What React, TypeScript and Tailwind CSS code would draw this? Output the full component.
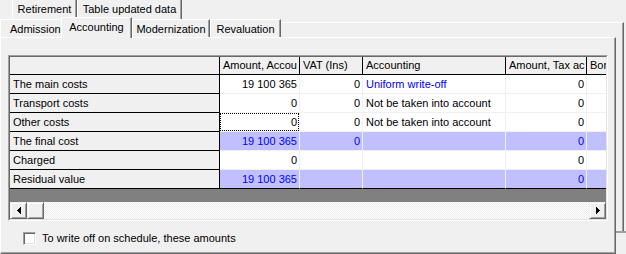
import React from "react";

type Row = {
  label: string;
  hi: boolean;
  cells: string[];
  blue: boolean[];
  focus?: number;
};

const colW = ["w-[80px]", "w-[63px]", "w-[143px]", "w-[81px]", "w-[40px]"];
const header = ["Amount, Accou", "VAT (Ins)", "Accounting", "Amount, Tax ac", "Bor"];

const rows: Row[] = [
  { label: "The main costs", hi: false, cells: ["19 100 365", "0", "Uniform write-off", "0", ""], blue: [false, false, true, false, false] },
  { label: "Transport costs", hi: false, cells: ["0", "0", "Not be taken into account", "0", ""], blue: [false, false, false, false, false] },
  { label: "Other costs", hi: false, cells: ["0", "0", "Not be taken into account", "0", ""], blue: [false, false, false, false, false], focus: 0 },
  { label: "The final cost", hi: true, cells: ["19 100 365", "0", "", "0", ""], blue: [true, true, true, true, true] },
  { label: "Charged", hi: false, cells: ["0", "", "", "0", ""], blue: [false, false, false, false, false] },
  { label: "Residual value", hi: true, cells: ["19 100 365", "", "", "0", ""], blue: [true, true, true, true, true] },
];

function TopTab({ w, children }: { w: string; children: React.ReactNode }) {
  return (
    <div
      className={`${w} h-full shrink-0 flex items-center justify-center pb-[1px] border-l border-white border-r border-r-[#696969] shadow-[inset_-1px_0_0_#a0a0a0]`}
    >
      {children}
    </div>
  );
}

function ScrollButton({ dir }: { dir: "left" | "right" | "none" }) {
  return (
    <div className="w-[17px] h-[17px] shrink-0 bg-[#f0f0f0] border border-t-[#f0f0f0] border-l-[#f0f0f0] border-b-[#696969] border-r-[#696969] shadow-[inset_1px_1px_0_#ffffff,inset_-1px_-1px_0_#a0a0a0] flex items-center justify-center">
      {dir === "left" && (
        <svg width="4" height="7" viewBox="0 0 4 7" shapeRendering="crispEdges">
          <polygon points="4,0 4,7 0,3.5" fill="#000" />
        </svg>
      )}
      {dir === "right" && (
        <svg width="4" height="7" viewBox="0 0 4 7" shapeRendering="crispEdges">
          <polygon points="0,0 0,7 4,3.5" fill="#000" />
        </svg>
      )}
    </div>
  );
}

export default function App() {
  return (
    <div className="w-[626px] h-[254px] overflow-hidden bg-[#f0f0f0] flex flex-col text-[11px] leading-[13px] text-black font-['Liberation_Sans',Arial,sans-serif]">
      {/* back row of tabs */}
      <div className="h-[19px] shrink-0 flex pl-[12px]">
        <TopTab w="w-[65px]">Retirement</TopTab>
        <TopTab w="w-[105px]">Table updated data</TopTab>
      </div>

      <div className="flex flex-1 min-h-0">
        <div className="w-[616px] shrink-0 flex flex-col">
          {/* front row of tabs */}
          <div className="h-[18px] shrink-0 flex">
            <div className="w-[61px] h-full shrink-0 flex items-center pl-[9px] pt-[1px] border-t border-l border-white">
              Admission
            </div>
            <div className="relative z-10 w-[71px] h-[21px] -mt-[2px] shrink-0 flex items-center justify-center pb-[1px] bg-[#f0f0f0] border-t border-l border-white border-r border-r-[#696969] shadow-[inset_-1px_0_0_#a0a0a0]">
              Accounting
            </div>
            <div className="w-[78px] h-full shrink-0 flex items-center justify-center pt-[1px] border-t border-l border-white border-r border-r-[#696969] shadow-[inset_-1px_0_0_#a0a0a0]">
              Modernization
            </div>
            <div className="w-[71px] h-full shrink-0 flex items-center justify-center pt-[1px] border-t border-l border-white border-r border-r-[#696969] shadow-[inset_-1px_0_0_#a0a0a0]">
              Revaluation
            </div>
            <div className="flex-1 pt-[3px]">
              <div className="h-full border-t border-white" />
            </div>
          </div>

          {/* page */}
          <div className="flex-1 flex flex-col border-t border-l border-white border-r border-b border-r-[#696969] border-b-[#696969] shadow-[inset_-1px_-1px_0_#a0a0a0]">
            <div className="ml-[7px] mt-[17px] w-[600px] border border-t-[#a0a0a0] border-l-[#a0a0a0] border-b-white border-r-white">
              <div className="border border-t-[#696969] border-l-[#696969] border-b-[#e3e3e3] border-r-[#e3e3e3] overflow-hidden">
                {/* header */}
                <div className="h-[18px] flex">
                  <div className="w-[210px] shrink-0 h-full bg-[#f0f0f0] border-r border-b border-black" />
                  {header.map((h, i) => (
                    <div
                      key={h}
                      className={`${colW[i]} shrink-0 h-full flex items-center pl-[3px] overflow-hidden whitespace-nowrap bg-[#f0f0f0] border-r border-b border-black`}
                    >
                      {h}
                    </div>
                  ))}
                </div>

                {rows.map((r, ri) => {
                  const last = ri === rows.length - 1;
                  return (
                    <div key={r.label} className="h-[19px] flex">
                      <div className="w-[210px] shrink-0 h-full flex items-center pl-[3px] bg-[#f0f0f0] border-r border-b border-black">
                        {r.label}
                      </div>
                      {r.cells.map((c, ci) => {
                        const bg = r.hi ? "bg-[#c0c0ff]" : "bg-white";
                        const color = r.blue[ci] ? "text-[#0000ff]" : "text-black";
                        const line = last ? "border-b-black" : "border-b-[#f0f0f0]";
                        const align = ci === 2 ? "justify-start pl-[3px]" : "justify-end pr-[2px]";
                        if (r.focus === ci) {
                          return (
                            <div
                              key={ci}
                              className={`${colW[ci]} shrink-0 h-full flex ${bg} border-r border-r-[#f0f0f0] border-b ${line}`}
                            >
                              <div className={`flex-1 flex items-center justify-end pr-[1px] border border-dotted border-black ${color}`}>
                                {c}
                              </div>
                            </div>
                          );
                        }
                        return (
                          <div
                            key={ci}
                            className={`${colW[ci]} shrink-0 h-full flex items-center ${align} overflow-hidden whitespace-nowrap ${bg} ${color} border-r border-r-[#f0f0f0] border-b ${line}`}
                          >
                            {c}
                          </div>
                        );
                      })}
                    </div>
                  );
                })}

                <div className="h-[13px] bg-[#808080]" />

                {/* horizontal scroll bar */}
                <div className="h-[17px] flex">
                  <ScrollButton dir="left" />
                  <ScrollButton dir="none" />
                  <div className="flex-1 bg-[repeating-conic-gradient(#ffffff_0_25%,#ececec_0_50%)] bg-[length:2px_2px]" />
                  <ScrollButton dir="right" />
                </div>
              </div>
            </div>

            <label className="ml-[22px] mt-[11px] flex items-center gap-[6px]">
              <span className="w-[13px] h-[13px] shrink-0 bg-white border border-t-[#a0a0a0] border-l-[#a0a0a0] border-b-white border-r-white shadow-[inset_1px_1px_0_#696969,inset_-1px_-1px_0_#e3e3e3]" />
              <span>To write off on schedule, these amounts</span>
            </label>
          </div>
        </div>

        {/* outer frame edge */}
        <div className="w-[10px] shrink-0 flex flex-col">
          <div className="h-[3px]" />
          <div className="h-[209px] w-[8px] border-t border-white border-r border-r-[#696969] shadow-[inset_-1px_0_0_#a0a0a0]" />
          <div className="h-[2px] bg-[#a0a0a0]" />
        </div>
      </div>
    </div>
  );
}
